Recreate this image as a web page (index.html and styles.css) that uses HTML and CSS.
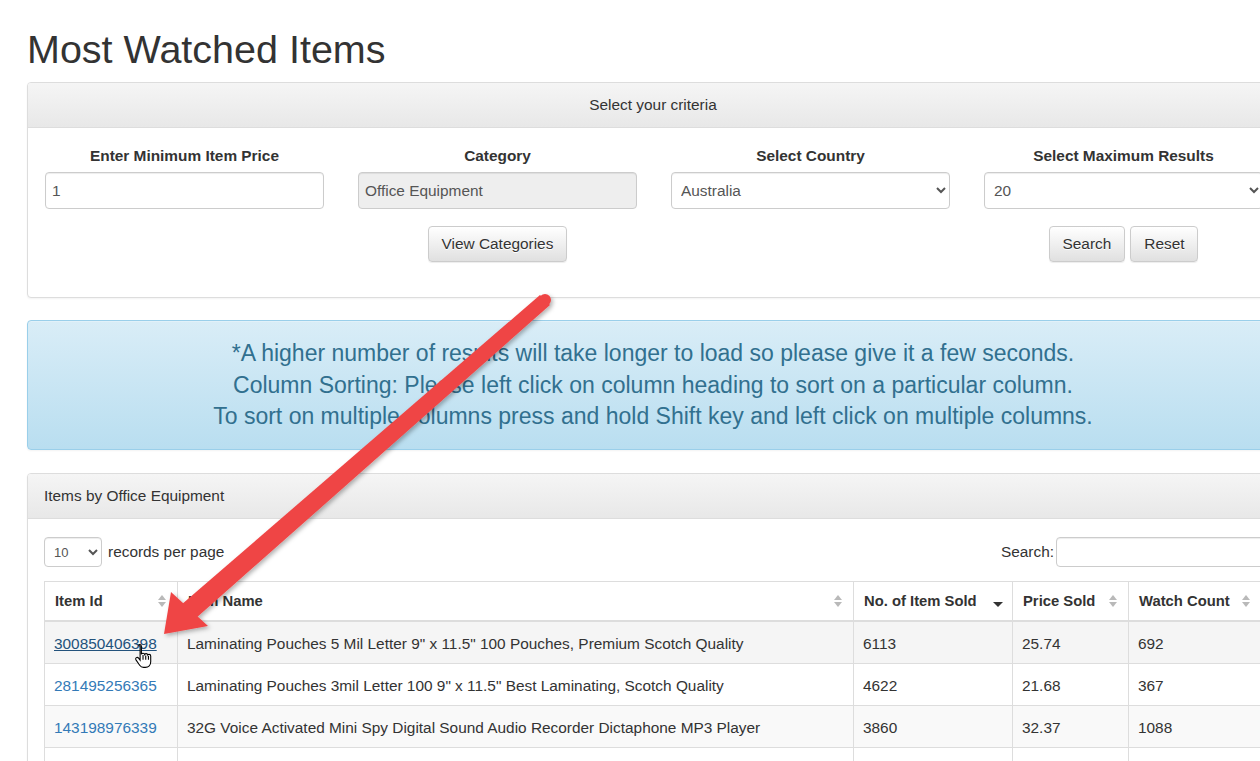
FILE: index.html
```html
<!DOCTYPE html>
<html lang="en">
<head>
  <meta charset="UTF-8">
  <title>Most Watched Items</title>
  <link rel="stylesheet" href="styles.css">
</head>
<body>

<div class="container">
  <h1>Most Watched Items</h1>

  <div class="panel">
    <div class="panel-heading center">Select your criteria</div>
    <div class="panel-body criteria">
      <div class="field">
        <label>Enter Minimum Item Price</label>
        <input class="form-control" type="text" value="1">
      </div>
      <div class="field">
        <label>Category</label>
        <input class="form-control" type="text" value="Office Equipment" disabled>
        <div class="actions">
          <button class="btn">View Categories</button>
        </div>
      </div>
      <div class="field">
        <label>Select Country</label>
        <select class="form-control">
          <option>Australia</option>
        </select>
      </div>
      <div class="field">
        <label>Select Maximum Results</label>
        <select class="form-control">
          <option>20</option>
        </select>
        <div class="actions">
          <button class="btn">Search</button>
          <button class="btn">Reset</button>
        </div>
      </div>
    </div>
  </div>

  <div class="alert">
    *A higher number of results will take longer to load so please give it a few seconds.<br>
    Column Sorting: Please left click on column heading to sort on a particular column.<br>
    To sort on multiple columns press and hold Shift key and left click on multiple columns.
  </div>

  <div class="panel">
    <div class="panel-heading">Items by Office Equipment</div>
    <div class="panel-body">
      <div class="table-tools">
        <div class="length">
          <select class="form-control small">
            <option>10</option>
          </select>
          records per page
        </div>
        <div class="filter">
          Search:<input class="form-control search" type="text">
        </div>
      </div>

      <table class="items">
        <thead>
          <tr>
            <th class="c-id"><div class="th">Item Id <span class="sort"></span></div></th>
            <th class="c-name"><div class="th">Item Name <span class="sort"></span></div></th>
            <th class="c-sold"><div class="th">No. of Item Sold <span class="sort desc"></span></div></th>
            <th class="c-price"><div class="th">Price Sold <span class="sort"></span></div></th>
            <th><div class="th">Watch Count <span class="sort"></span></div></th>
          </tr>
        </thead>
        <tbody>
          <tr class="hover">
            <td><a href="#" class="active">300850406398</a></td>
            <td>Laminating Pouches 5 Mil Letter 9" x 11.5" 100 Pouches, Premium Scotch Quality</td>
            <td>6113</td>
            <td>25.74</td>
            <td>692</td>
          </tr>
          <tr>
            <td><a href="#">281495256365</a></td>
            <td>Laminating Pouches 3mil Letter 100 9" x 11.5" Best Laminating, Scotch Quality</td>
            <td>4622</td>
            <td>21.68</td>
            <td>367</td>
          </tr>
          <tr class="odd">
            <td><a href="#">143198976339</a></td>
            <td>32G Voice Activated Mini Spy Digital Sound Audio Recorder Dictaphone MP3 Player</td>
            <td>3860</td>
            <td>32.37</td>
            <td>1088</td>
          </tr>
          <tr>
            <td>&nbsp;</td>
            <td>&nbsp;</td>
            <td>&nbsp;</td>
            <td>&nbsp;</td>
            <td>&nbsp;</td>
          </tr>
        </tbody>
      </table>
    </div>
  </div>
</div>

<!-- annotation drawn over the screenshot -->
<svg class="annotation" width="1260" height="761" viewBox="0 0 1260 761">
  <defs>
    <filter id="shadow" x="-20%" y="-20%" width="140%" height="140%">
      <feDropShadow dx="2" dy="2" stdDeviation="2" flood-color="#000" flood-opacity="0.3"/>
    </filter>
  </defs>
  <g filter="url(#shadow)" fill="#ef4545">
    <polygon points="540,295 550,305 195,619 181,605"/>
    <circle cx="545" cy="300" r="6"/>
    <polygon points="164,634 171,592 208,626"/>
  </g>
</svg>

<svg class="cursor" width="20" height="26" viewBox="0 0 18 24">
  <path d="M5 1.5c1 0 1.6.7 1.6 1.6v7.2c.3-.6.9-.9 1.5-.9.8 0 1.4.5 1.5 1.2.3-.5.8-.8 1.4-.8.8 0 1.4.6 1.5 1.3.3-.4.7-.6 1.2-.6.9 0 1.5.7 1.5 1.600v5.2c0 3-2 5.2-5 5.2H8.6c-1.6 0-2.7-.7-3.6-2L1.6 15.6c-.5-.8-.3-1.7.4-2.1.7-.4 1.5-.2 2 .4l1.4 1.9V3.1C3.4 2.2 4 1.5 5 1.5z" fill="#fff" stroke="#000" stroke-width="1"/>
  <path d="M8.1 11v4.5M10.6 11.5v4M13.1 12v3.5" stroke="#000" stroke-width="1" fill="none"/>
</svg>

</body>
</html>
```

FILE: styles.css
```css
html, body {
  margin: 0;
  overflow: hidden;
}

body {
  font-family: "Liberation Sans", Arial, sans-serif;
  font-size: 15.4px;
  line-height: 1.43;
  color: #333;
  background: #fff;
  position: relative;
  width: 1260px;
  height: 761px;
}

.container {
  width: 1252px;
  margin-left: 27px;
}

h1 {
  font-size: 39.5px;
  font-weight: normal;
  line-height: 1.1;
  margin: 28px 0 11px;
  color: #333;
}

/* panels */
.panel {
  border: 1px solid #ddd;
  border-radius: 4px;
  box-shadow: 0 1px 2px rgba(0,0,0,0.05);
  background: #fff;
  margin-bottom: 22px;
}

.panel-heading {
  height: 44px;
  line-height: 44px;
  padding: 0 16px;
  border-bottom: 1px solid #ddd;
  border-radius: 3px 3px 0 0;
  background: linear-gradient(to bottom, #f5f5f5 0%, #e8e8e8 100%);
  font-size: 15.4px;
  color: #333;
}

.panel-heading.center { text-align: center; }

.panel-body {
  padding: 16px;
}

/* criteria form */
.criteria {
  display: grid;
  grid-template-columns: repeat(4, 313px);
  padding: 17px 0 34px;
  height: 118px;
}

.field {
  padding: 0 17px;
  text-align: center;
}

.field label {
  display: block;
  font-weight: bold;
  font-size: 15.4px;
  margin-bottom: 5px;
}

.form-control {
  display: block;
  box-sizing: border-box;
  width: 100%;
  height: 37px;
  padding: 6px 6px;
  font-family: inherit;
  font-size: 15.4px;
  color: #555;
  background: #fff;
  border: 1px solid #ccc;
  border-radius: 4px;
  box-shadow: inset 0 1px 1px rgba(0,0,0,0.075);
  text-align: left;
}

.form-control[disabled] {
  background: #eee;
  color: #555;
}

select.form-control {
  padding: 6px 5px;
}

.actions {
  margin-top: 17px;
  display: flex;
  justify-content: center;
  gap: 5px;
}

.btn {
  height: 36px;
  padding: 6px 13px;
  font-family: inherit;
  font-size: 15.4px;
  color: #333;
  border: 1px solid #ccc;
  border-radius: 4px;
  background: linear-gradient(to bottom, #fff 0%, #e0e0e0 100%);
  box-shadow: inset 0 1px 0 rgba(255,255,255,0.15), 0 1px 1px rgba(0,0,0,0.075);
  text-shadow: 0 1px 0 #fff;
  cursor: pointer;
}

/* info alert */
.alert {
  box-sizing: border-box;
  height: 130px;
  padding: 17px 10px;
  margin: 0 0 23px;
  border: 1px solid #9acfea;
  border-radius: 4px;
  background: linear-gradient(to bottom, #d9edf7 0%, #b9def0 100%);
  box-shadow: inset 0 1px 0 rgba(255,255,255,0.25), 0 1px 2px rgba(0,0,0,0.05);
  color: #31708f;
  text-align: center;
  font-size: 23px;
  line-height: 31.5px;
  white-space: nowrap;
}

/* table tools */
.table-tools {
  display: flex;
  justify-content: space-between;
  align-items: center;
  margin: 2px 0 14px;
}

.length,
.filter {
  display: flex;
  align-items: center;
  gap: 6px;
}

.form-control.small {
  width: 58px;
  height: 30px;
  padding: 2px 5px;
  font-size: 13px;
}

.filter {
  gap: 2px;
  margin-right: -20px;
}

.form-control.search {
  width: 226px;
  height: 30px;
}

/* table */
.items {
  width: 1218px;
  border-collapse: collapse;
  border: 1px solid #ddd;
  table-layout: fixed;
}

.items th,
.items td {
  border: 1px solid #ddd;
  text-align: left;
  vertical-align: middle;
  white-space: nowrap;
  overflow: hidden;
}

.items th {
  height: 38px;
  padding: 0 9px 0 10px;
  border-bottom: 2px solid #ddd;
  font-weight: bold;
  font-size: 14.8px;
}

.items td {
  height: 39px;
  padding: 2px 9px 0;
}

.c-id { width: 113px; }
.c-name { width: 656px; }
.c-sold { width: 139px; }
.c-price { width: 96px; }

.th {
  display: flex;
  justify-content: space-between;
  align-items: center;
}

.sort {
  width: 9px;
  height: 13px;
  margin-right: 1px;
  flex: none;
  position: relative;
}

.sort::before,
.sort::after {
  content: "";
  position: absolute;
  left: 0;
  border-left: 4.5px solid transparent;
  border-right: 4.5px solid transparent;
}

.sort::before {
  top: 0;
  border-bottom: 5px solid #b9b9b9;
}

.sort::after {
  bottom: 1px;
  border-top: 5px solid #b9b9b9;
}

.sort.desc::before { display: none; }

.sort.desc::after {
  bottom: 1px;
  border-top-color: #333;
  border-left-width: 5px;
  border-right-width: 5px;
  border-top-width: 5px;
}

.items tbody tr.hover td { background: #f5f5f5; }
.items tbody tr.odd td { background: #f9f9f9; }

.items a {
  color: #337ab7;
  text-decoration: none;
}

.items a.active {
  color: #23527c;
  text-decoration: underline;
}

/* overlay annotation */
.annotation {
  position: absolute;
  top: 0;
  left: 0;
  pointer-events: none;
}

.cursor {
  position: absolute;
  left: 134px;
  top: 643px;
  pointer-events: none;
}
```
